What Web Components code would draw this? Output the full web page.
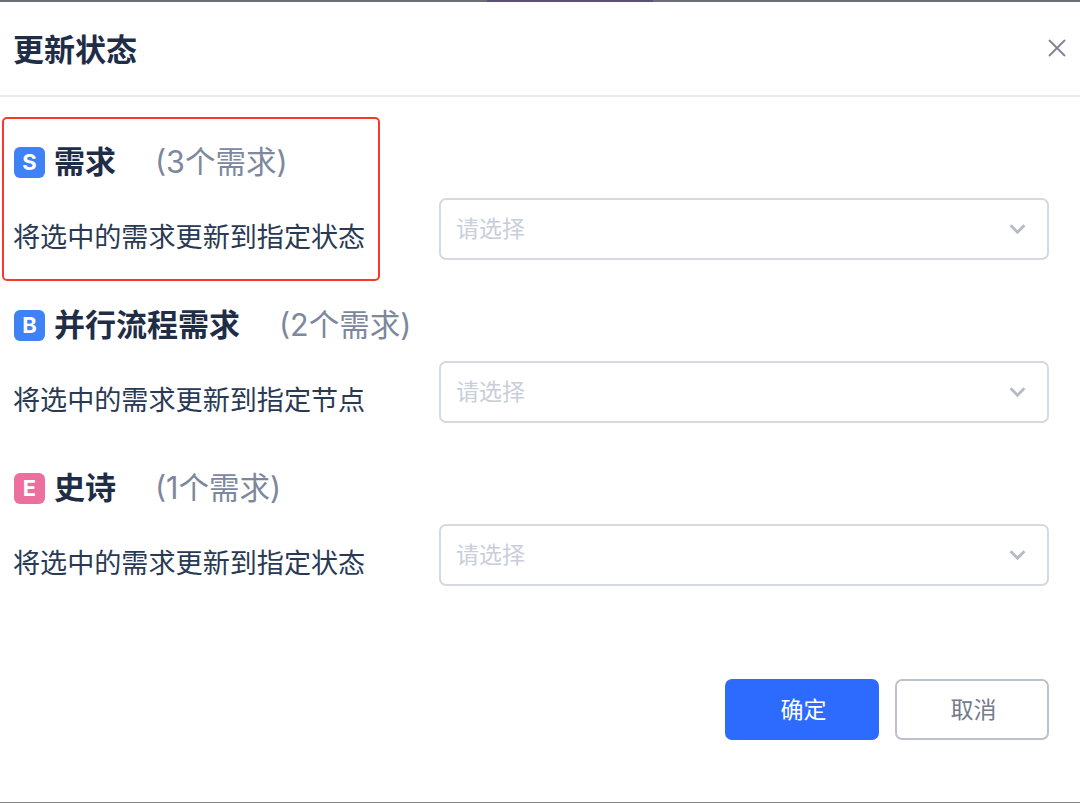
<!DOCTYPE html>
<html lang="zh-CN">
<head>
<meta charset="utf-8">
<title>更新状态</title>
<style>
html,body{margin:0;padding:0;background:#fff;}
body{font-family:"Noto Sans CJK SC","Inter",sans-serif;color:#24324d;}
</style>
</head>
<body>
<status-dialog heading="更新状态">
  <status-section letter="S" color="#3f82f8" name="需求" count="(3个需求)" highlighted>将选中的需求更新到指定状态</status-section>
  <status-section letter="B" color="#3f82f8" name="并行流程需求" count="(2个需求)">将选中的需求更新到指定节点</status-section>
  <status-section letter="E" color="#ec709d" name="史诗" count="(1个需求)">将选中的需求更新到指定状态</status-section>
</status-dialog>
<script>
const FONT='"Noto Sans CJK SC","Inter",sans-serif';

class SelectBox extends HTMLElement{
  constructor(){
    super();
    this.attachShadow({mode:'open'}).innerHTML=`
    <style>
      :host{display:flex;align-items:center;justify-content:space-between;box-sizing:border-box;width:610px;height:62px;
        border:2px solid #d5d9e2;border-radius:7px;padding:0 21px 0 15px;background:#fff;
        font:400 23px/1 ${FONT};color:#c9ced9;}
      span{padding-bottom:4px;}
      svg{display:block;flex:none;}
    </style>
    <span><slot></slot></span>
    <svg width="17" height="12" viewBox="0 0 17 12" fill="none" stroke="#b4bac8" stroke-width="2.8" aria-hidden="true"><path d="M1.6 2.2 8.5 9.2 15.4 2.2"/></svg>`;
  }
}
customElements.define('select-box',SelectBox);

class StatusSection extends HTMLElement{
  constructor(){
    super();
    const a=n=>this.getAttribute(n)||'';
    this.attachShadow({mode:'open'}).innerHTML=`
    <style>
      :host{display:grid;position:relative;grid-template-columns:425px 610px;grid-template-rows:40px 62px;row-gap:16px;
        box-sizing:border-box;height:163px;padding:24px 0 21px 14px;}
      .head{grid-column:1 / -1;display:flex;align-items:center;white-space:nowrap;}
      .badge{flex:none;box-sizing:border-box;width:31px;height:31px;border-radius:6px;margin-right:9px;
        display:flex;align-items:center;justify-content:center;color:#fff;font:700 22px/1 "Inter",sans-serif;}
      .name{font:700 31px/40px ${FONT};color:#1f2d47;margin-right:39px;padding-bottom:4px;}
      .count{font:400 30.5px/40px "Inter","Noto Sans CJK SC",sans-serif;color:#7d889d;padding-bottom:1px;}
      .label{display:flex;align-items:center;padding-top:14px;margin-left:-1px;font:400 27.1px/1 ${FONT};color:#2a3a55;white-space:nowrap;}
      .mark{position:absolute;left:2px;top:-1px;width:378px;height:164px;box-sizing:border-box;border:2.5px solid #f8392a;border-radius:5px;pointer-events:none;}
    </style>
    <div class="head"><span class="badge" style="background:${a('color')}">${a('letter')}</span><span class="name">${a('name')}</span><span class="count">${a('count')}</span></div>
    <div class="label"><slot></slot></div>
    <select-box>请选择</select-box>
    ${this.hasAttribute('highlighted')?'<div class="mark"></div>':''}`;
  }
}
customElements.define('status-section',StatusSection);

class ActionButton extends HTMLElement{
  constructor(){
    super();
    this.attachShadow({mode:'open'}).innerHTML=`
    <style>
      :host{display:flex;align-items:center;justify-content:center;box-sizing:border-box;width:154px;height:61px;border-radius:7px;padding:0 0 2px 3px;
        font:400 23px/1 ${FONT};border:2px solid #bcc1cd;color:#737b8c;background:#fff;}
      :host([primary]){background:#2d6bff;border-color:#2d6bff;color:#fff;}
    </style><slot></slot>`;
  }
}
customElements.define('action-button',ActionButton);

class StatusDialog extends HTMLElement{
  constructor(){
    super();
    this.attachShadow({mode:'open'}).innerHTML=`
    <style>
      :host{display:flex;flex-direction:column;box-sizing:border-box;width:1080px;height:803px;background:#fff;border-bottom:1px solid #858585;overflow:hidden;}
      .strip{flex:none;height:2px;background:linear-gradient(90deg,#6b6e75 487px,#5d4f78 487px,#5d4f78 653px,#6b6e75 653px);}
      header{flex:none;box-sizing:border-box;height:95px;display:flex;align-items:center;justify-content:space-between;padding:0 13px 2px 13px;border-bottom:2px solid #e9ebf0;}
      h1{margin:0;font:700 31px/1 ${FONT};color:#1f2d47;}
      .close{display:block;}
      main{flex:none;padding-top:21px;}
      footer{flex:1;display:flex;justify-content:flex-end;gap:16px;padding:72px 31px 0 0;}
    </style>
    <div class="strip"></div>
    <header><h1>${this.getAttribute('heading')}</h1>
      <svg class="close" width="20" height="20" viewBox="0 0 20 20" fill="none" stroke="#7b8394" stroke-width="1.8" aria-label="关闭"><path d="M2 2 18 18M18 2 2 18"/></svg>
    </header>
    <main><slot></slot></main>
    <footer><action-button primary>确定</action-button><action-button>取消</action-button></footer>`;
  }
}
customElements.define('status-dialog',StatusDialog);
</script>
</body>
</html>
